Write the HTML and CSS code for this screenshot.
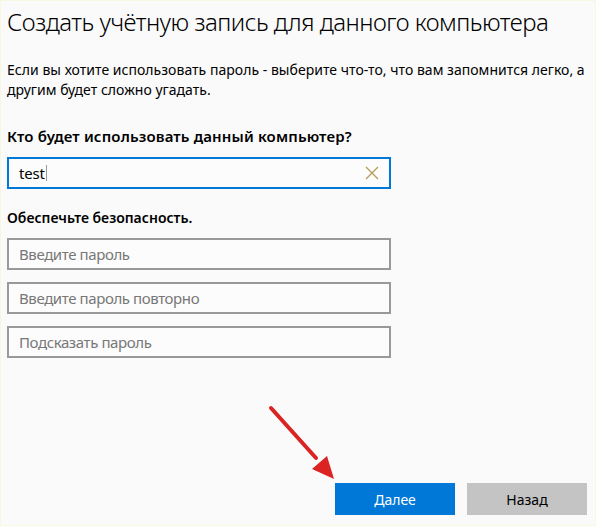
FILE: index.html
```html
<!DOCTYPE html>
<html lang="ru">
<head>
<meta charset="utf-8">
<link rel="stylesheet" href="styles.css">
</head>
<body>
<div class="frame">
  <h1 class="title">Создать учётную запись для данного компьютера</h1>
  <p class="intro">Если вы хотите использовать пароль - выберите что-то, что вам запомнится легко, а<br>другим будет сложно угадать.</p>
  <h2 class="label first">Кто будет использовать данный компьютер?</h2>
  <div class="field active">
    <span class="value">test</span><span class="caret"></span>
    <svg class="clear" width="14" height="14" viewBox="0 0 14 14"><path d="M1 1 L13 13 M13 1 L1 13" stroke="#b89a5a" stroke-width="1.3" fill="none"/></svg>
  </div>
  <h2 class="label second">Обеспечьте безопасность.</h2>
  <div class="stack">
    <div class="field"><span class="ph">Введите пароль</span></div>
    <div class="field"><span class="ph">Введите пароль повторно</span></div>
    <div class="field"><span class="ph">Подсказать пароль</span></div>
  </div>
  <div class="spacer"></div>
  <div class="buttons">
    <button class="btn primary">Далее</button>
    <button class="btn secondary">Назад</button>
  </div>
  <svg class="arrow" width="80" height="90" viewBox="0 0 80 90">
    <line x1="10" y1="12" x2="55" y2="62" stroke="#dc2323" stroke-width="4" stroke-linecap="round"/>
    <polygon points="73,83 51,73 66,60" fill="#dc2323"/>
  </svg>
</div>
</body>
</html>
```
FILE: styles.css
```css
html, body {
  margin: 0;
  padding: 0;
}
body {
  width: 596px;
  height: 526px;
  background: #fafafa;
  font-family: "Noto Sans", "Open Sans", sans-serif;
  color: #000;
  overflow: hidden;
}
.frame {
  position: relative;
  box-sizing: border-box;
  width: 596px;
  height: 526px;
  border: 1px solid #f8f8e2;
  padding: 0 0 10px 6px;
  display: flex;
  flex-direction: column;
}
.title {
  margin: 5px 0 0 0;
  font-weight: 300;
  font-size: 24px;
  line-height: 32px;
  letter-spacing: -0.5px;
  white-space: nowrap;
}
.intro {
  margin: 22px 0 0 0;
  font-size: 14px;
  line-height: 20px;
  letter-spacing: 0.03px;
  white-space: nowrap;
}
.label {
  margin: 22px 0 0 0;
  font-weight: 600;
  line-height: 20px;
}
.label.first {
  margin-top: 26px;
  font-size: 15px;
  letter-spacing: 0.15px;
}
.label.second {
  margin-top: 19px;
  font-size: 14px;
  letter-spacing: 0;
}
.field {
  box-sizing: border-box;
  width: 384px;
  height: 32px;
  border: 2px solid #999;
  display: flex;
  align-items: center;
  padding: 0 10px;
  font-size: 15px;
  background: #fcfcfc;
}
.field.active {
  border-color: #0078d7;
  margin-top: 11px;
}
.value {
  letter-spacing: -0.2px;
}
.caret {
  width: 1px;
  height: 16px;
  background: #999;
  margin-left: 1px;
}
.clear {
  margin-left: auto;
}
.ph {
  color: #777;
  letter-spacing: -0.4px;
}
.stack {
  display: flex;
  flex-direction: column;
  gap: 12px;
  margin-top: 10px;
}
.spacer {
  flex: 1;
}
.buttons {
  display: flex;
  justify-content: flex-end;
  gap: 12px;
  padding-right: 8px;
}
.btn {
  width: 120px;
  height: 32px;
  border: none;
  font-family: "Noto Sans", "Open Sans", sans-serif;
  font-size: 14px;
  padding: 0;
}
.primary {
  background: #0078d7;
  color: #fff;
}
.secondary {
  background: #c4c4c4;
  color: #000;
}
.arrow {
  position: absolute;
  left: 260px;
  top: 395px;
}
```
